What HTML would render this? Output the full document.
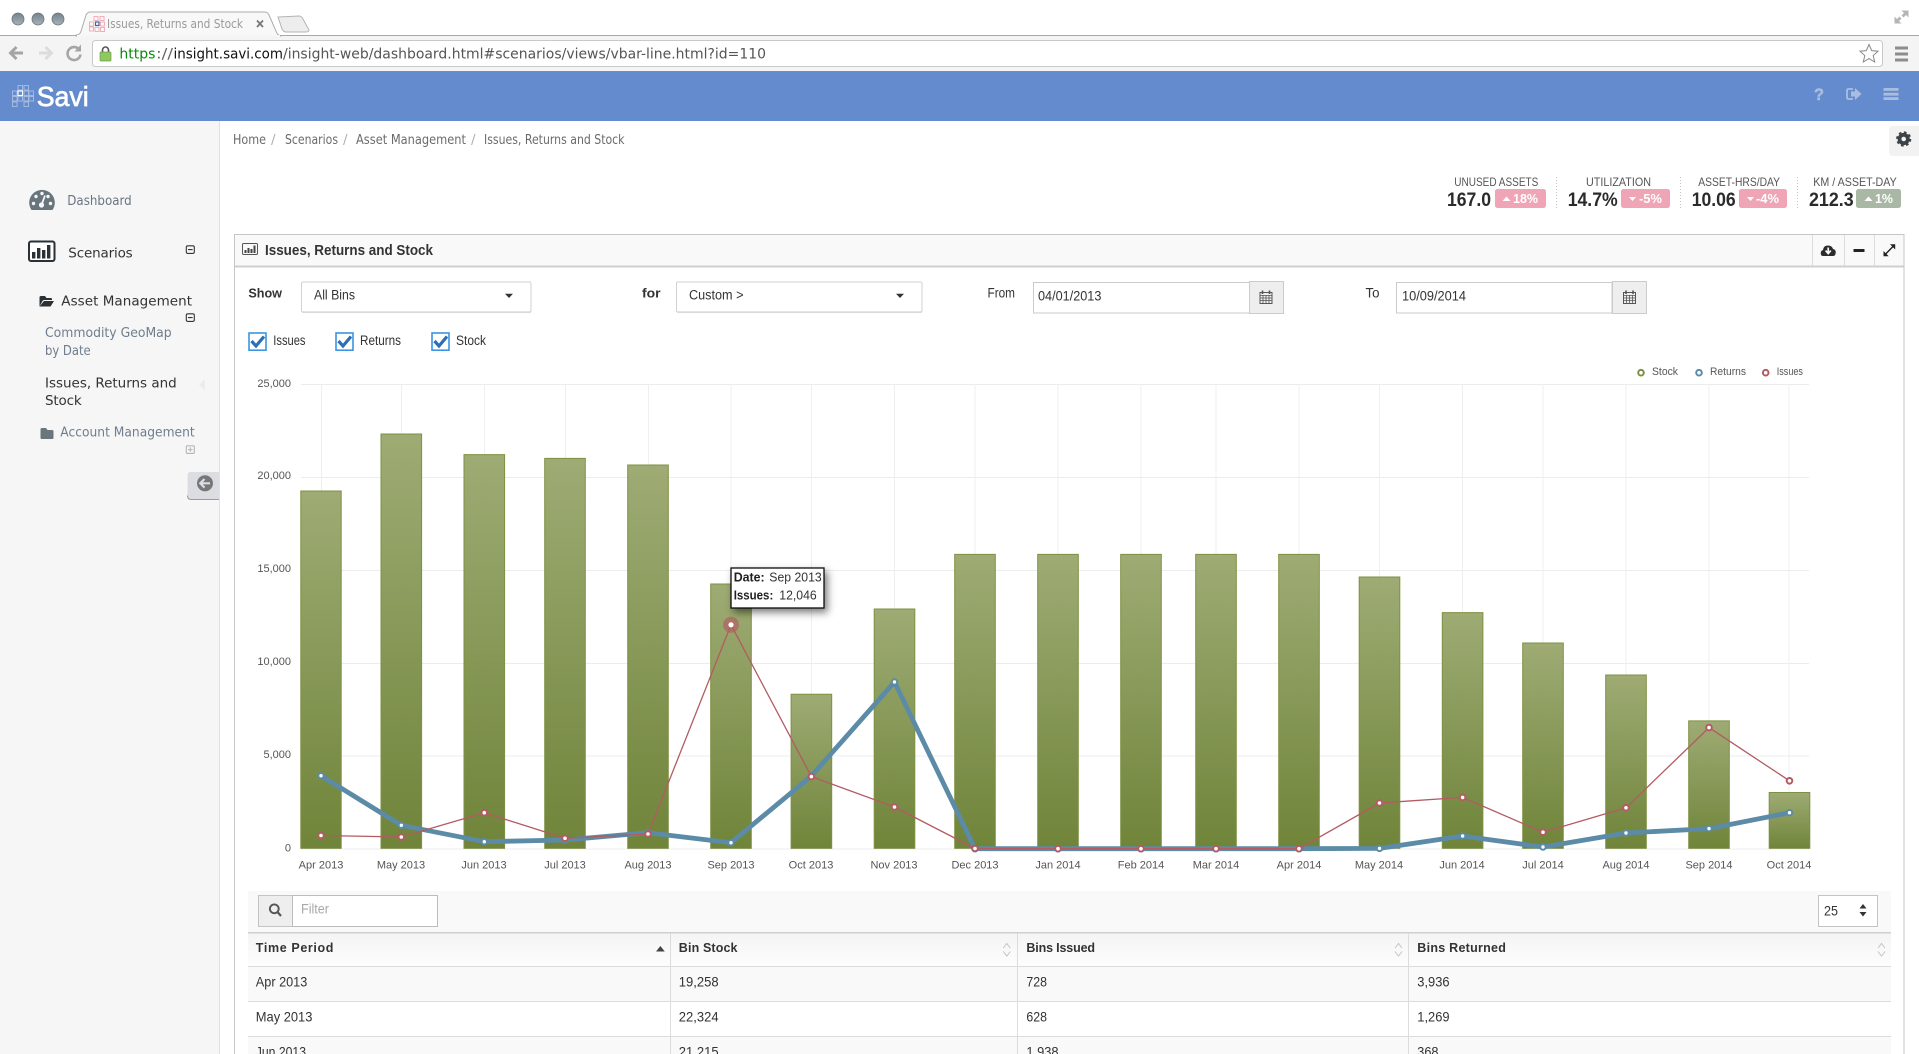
<!DOCTYPE html>
<html lang="en"><head><meta charset="utf-8"><title>Issues, Returns and Stock</title>
<style>
html,body{margin:0;padding:0;background:#fff;width:1919px;height:1054px;overflow:hidden}
svg{display:block;position:absolute;left:0;top:0}
text{font-family:"Liberation Sans",sans-serif;white-space:pre}
.d{font-family:"DejaVu Sans",sans-serif}
.b{font-weight:bold}
.g{font-size:12px;fill:#595959}
.t{font-size:13.5px;fill:#333}
.h{font-size:13px;font-weight:bold;fill:#333}
.k{font-size:19px;font-weight:bold;fill:#2b2b2b}
.kl{font-size:12px;fill:#555}
.bd{font-size:13px;font-weight:bold;fill:#fff}
.bc{font-size:13.5px;fill:#6b6b6b}
.sb{font-size:13.5px}
</style></head><body>
<svg width="1919" height="1054" viewBox="0 0 1919 1054" xmlns="http://www.w3.org/2000/svg">
<defs>
<linearGradient id="bar" x1="0" y1="0" x2="0" y2="1"><stop offset="0" stop-color="#9ba970"/><stop offset="1" stop-color="#6b8033"/></linearGradient>
<linearGradient id="th" x1="0" y1="0" x2="0" y2="1"><stop offset="0" stop-color="#f4f4f4"/><stop offset="1" stop-color="#fdfdfd"/></linearGradient>
<linearGradient id="dot" x1="0" y1="0" x2="0" y2="1"><stop offset="0" stop-color="#74828c"/><stop offset="1" stop-color="#a6b2b8"/></linearGradient>
<filter id="sh" x="-30%" y="-30%" width="170%" height="170%"><feDropShadow dx="3" dy="4" stdDeviation="4" flood-color="#000" flood-opacity=".5"/></filter>
</defs>
<rect width="1919" height="1054" fill="#fff"/>

<!-- browser chrome -->
<rect x="0" y="35" width="1919" height="37" fill="#f4f4f4"/>
<rect x="0" y="35" width="1919" height="1" fill="#a8a8a8"/>
<circle cx="18" cy="19" r="6" fill="url(#dot)" stroke="#6d7378" stroke-width=".8"/>
<circle cx="38" cy="19" r="6" fill="url(#dot)" stroke="#6d7378" stroke-width=".8"/>
<circle cx="58" cy="19" r="6" fill="url(#dot)" stroke="#6d7378" stroke-width=".8"/>
<path d="M76 35 C80 35 81 32 82 28 L86 15 C87 13 88 12 90 12 L264 12 C267 12 268 13 269 15 L276 31 C277 34 278 35 281 36 L76 36 Z" fill="#f8f8f8" stroke="#ababab" stroke-width="1"/>
<rect x="77" y="35" width="203" height="2" fill="#f6f6f6"/>
<path d="M278 17 L299 16 C301 16 302 17 303 19 L309 30 C309 31 308 32 306 32 L286 32 C284 32 283 31 282 29 Z" fill="#ededed" stroke="#b4b4b4"/>
<g fill="none" stroke="#f0b0ba" stroke-width="1"><rect x="94" y="16.5" width="4" height="4"/><rect x="100" y="16.5" width="4" height="4"/><rect x="89.5" y="22" width="4" height="4"/><rect x="100.5" y="22" width="4" height="4"/><rect x="89.5" y="27" width="4" height="4"/><rect x="95" y="27.5" width="4" height="4"/><rect x="100.5" y="27.5" width="4" height="4"/></g>
<rect x="95.5" y="22" width="3.5" height="3.5" fill="#fff" stroke="#3a5fb8" stroke-width="1.2"/>
<text x="107" y="28" font-size="12.5" fill="#9a9a9a" textLength="136" lengthAdjust="spacingAndGlyphs" class="d">Issues, Returns and Stock</text>
<path d="M257 20.5 L263 27 M263 20.5 L257 27" stroke="#777" stroke-width="1.8"/>
<path d="M1901.5 10.5 L1908.5 10.5 L1908.5 17.5 L1906 15 L1903.5 17.5 L1901.5 15.5 L1904 13 Z M1894.5 23.5 L1894.5 16.5 L1897 19 L1899.5 16.5 L1901.5 18.5 L1899 21 L1901.5 23.5 Z" fill="#b5b5b5"/>
<path d="M23 53 L11 53 M16.5 47 L10.5 53 L16.5 59" fill="none" stroke="#a5a5a5" stroke-width="3"/>
<path d="M39 53 L51 53 M45.5 47 L51.5 53 L45.5 59" fill="none" stroke="#dcdcdc" stroke-width="3"/>
<path d="M79.5 50 A6.5 6.5 0 1 0 80.5 54.5" fill="none" stroke="#a5a5a5" stroke-width="2.6"/><path d="M81 44.5 L81 51.5 L74.5 51.5 Z" fill="#a5a5a5"/>
<rect x="92.5" y="40.5" width="1790" height="26" rx="3" fill="#fff" stroke="#c9c9c9"/>
<path d="M102.5 53 L102.5 50 A3 3 0 0 1 108.5 50 L108.5 53" fill="none" stroke="#555" stroke-width="1.6"/>
<rect x="100" y="52" width="11" height="9" rx="1" fill="#8fc862" stroke="#6e9e45" stroke-width=".7"/>
<text x="119.4" y="58.3" class="d" font-size="14.5" fill="#0a8a0a" textLength="36" lengthAdjust="spacingAndGlyphs">https</text>
<text x="156" y="58.3" class="d" font-size="14.5" fill="#666" textLength="17" lengthAdjust="spacingAndGlyphs">://</text>
<text x="173.5" y="58.3" class="d" font-size="14.5" fill="#111" textLength="109.5" lengthAdjust="spacingAndGlyphs">insight.savi.com</text>
<text x="283" y="58.3" class="d" font-size="14.5" fill="#555" textLength="483" lengthAdjust="spacingAndGlyphs">/insight-web/dashboard.html#scenarios/views/vbar-line.html?id=110</text>
<path d="M1869 44.5 L1871.7 50.6 L1878 51.2 L1873.2 55.5 L1874.7 62 L1869 58.6 L1863.3 62 L1864.8 55.5 L1860 51.2 L1866.3 50.6 Z" fill="#fff" stroke="#888" stroke-width="1"/>
<g fill="#8d8d8d"><rect x="1895" y="46.5" width="13" height="3"/><rect x="1895" y="52.5" width="13" height="3"/><rect x="1895" y="58.5" width="13" height="3"/></g>
<rect x="0" y="71" width="1919" height="1" fill="#8a8a8a"/>

<!-- app header -->
<rect x="0" y="72" width="1919" height="49" fill="#648bcd"/>
<g fill="none" stroke="#a9bfe4" stroke-width=".9"><rect x="18" y="85.5" width="4.5" height="4.5"/><rect x="24" y="85.5" width="4.5" height="4.5"/><rect x="12.5" y="91" width="4.5" height="4.5"/><rect x="29" y="91" width="4.5" height="4.5"/><rect x="24" y="91" width="4.5" height="4.5"/><rect x="12.5" y="96.5" width="4.5" height="4.5"/><rect x="18" y="96.5" width="4.5" height="4.5"/><rect x="24" y="96.5" width="4.5" height="4.5"/><rect x="29" y="96.5" width="4.5" height="4.5"/><rect x="12.5" y="102" width="4.5" height="4.5"/><rect x="24" y="102" width="4.5" height="4.5"/></g>
<rect x="18" y="91" width="4.5" height="4.5" fill="none" stroke="#fff" stroke-width="1.1"/>
<text x="36.7" y="106" font-size="28" fill="#fff" stroke="#fff" stroke-width=".7" textLength="52" lengthAdjust="spacingAndGlyphs">Savi</text>
<text x="1814" y="100" font-size="17" class="b" fill="#a9bedf" stroke="#a9bedf" stroke-width=".5" textLength="10" lengthAdjust="spacingAndGlyphs">?</text>
<path d="M1853 89 L1848.5 89 Q1847 89 1847 90.5 L1847 97.5 Q1847 99 1848.5 99 L1853 99" fill="none" stroke="#a9bedf" stroke-width="1.8"/>
<path d="M1851 91.5 L1855 91.5 L1855 88 L1861.5 94 L1855 100 L1855 96.5 L1851 96.5 Z" fill="#a9bedf"/>
<g fill="#a9bedf"><rect x="1883.5" y="88" width="15" height="2.8"/><rect x="1883.5" y="92.8" width="15" height="2.8"/><rect x="1883.5" y="97.2" width="15" height="2.8"/></g>

<!-- sidebar -->
<rect x="0" y="121" width="219" height="933" fill="#f6f6f6"/>
<rect x="219" y="121" width="1" height="933" fill="#e2e2e2"/>
<path d="M31.5 210 A12.8 12.8 0 1 1 52.5 210 Z" fill="#69757c"/>
<g fill="#f6f6f6"><circle cx="33.5" cy="203.5" r="1.7"/><circle cx="36" cy="196.5" r="1.7"/><circle cx="42" cy="193.5" r="1.7"/><circle cx="50.5" cy="203.5" r="1.7"/><circle cx="48" cy="196.5" r="1.7"/><circle cx="41.5" cy="205" r="2.6"/></g>
<path d="M41.5 205 L45 195.5" stroke="#f6f6f6" stroke-width="1.8"/>
<text x="67.3" y="205" class="d sb" fill="#6a7580" textLength="64.4" lengthAdjust="spacingAndGlyphs">Dashboard</text>
<rect x="29" y="241.5" width="25.5" height="19.5" rx="2" fill="#fff" stroke="#2b3035" stroke-width="2"/>
<g fill="#2b3035"><rect x="32" y="252" width="3.4" height="6.5"/><rect x="37" y="248" width="3.4" height="10.5"/><rect x="42" y="250" width="3.4" height="8.5"/><rect x="47" y="245" width="3.4" height="13.5"/></g>
<text x="68.3" y="257.3" class="d sb" fill="#333" textLength="64.4" lengthAdjust="spacing">Scenarios</text>
<g fill="none" stroke="#333" stroke-width="1.1"><rect x="186.3" y="245.8" width="8" height="7.6" rx="1.5"/><rect x="186.3" y="313.8" width="8" height="7.6" rx="1.5"/></g>
<path d="M188 249.6 L192.6 249.6 M188 317.6 L192.6 317.6" stroke="#333" stroke-width="1.1"/>
<path d="M39.5 306.5 L39.5 297.5 Q39.5 296 41 296 L45 296 L46.5 298 L51 298 Q52 298 52 299 L52 300 L44 300 Q43 300 42.5 301 Z M43 306.5 L39.5 306.5 L44 301 L54 301 L50.5 306.5 Z" fill="#2b3035"/>
<text x="61.3" y="305.3" class="d sb" fill="#333" textLength="130.7" lengthAdjust="spacing">Asset Management</text>
<text x="45" y="337" class="d sb" fill="#6f7d8c" textLength="126.7" lengthAdjust="spacingAndGlyphs">Commodity GeoMap</text>
<text x="45" y="355" class="d sb" fill="#6f7d8c" textLength="45.7" lengthAdjust="spacingAndGlyphs">by Date</text>
<text x="45" y="387.3" class="d sb" fill="#333" textLength="131.7" lengthAdjust="spacing">Issues, Returns and</text>
<text x="45" y="405" class="d sb" fill="#333" textLength="36.7" lengthAdjust="spacing">Stock</text>
<path d="M205 379 L199 385 L205 391 Z" fill="#ececec"/>
<path d="M40.5 438 L40.5 429.5 Q40.5 428 42 428 L46 428 L47.5 430 L52 430 Q53.5 430 53.5 431.5 L53.5 438 Q53.5 439 52.5 439 L41.5 439 Q40.5 439 40.5 438 Z" fill="#6b757c"/>
<text x="60.3" y="436.7" class="d sb" fill="#6f7d8c" textLength="134.4" lengthAdjust="spacingAndGlyphs">Account Management</text>
<rect x="186.3" y="445.8" width="8" height="7.6" rx="1" fill="none" stroke="#b5b5b5" stroke-width="1.1"/>
<path d="M188 449.6 L192.6 449.6 M190.3 447.3 L190.3 452" stroke="#b5b5b5" stroke-width="1"/>
<path d="M219 472 L191 472 Q187.5 472 187.5 475.5 L187.5 495.5 Q187.5 499 191 499 L219 499 Z" fill="#dbdde3"/>
<path d="M187.5 495.5 Q187.5 499.5 191 499.5 L219 499.5" fill="none" stroke="#9c9c9c" stroke-width="1"/>
<circle cx="205" cy="483.3" r="8" fill="#777"/>
<path d="M210 483.3 L201 483.3 M204.5 479 L200.3 483.3 L204.5 487.6" fill="none" stroke="#dbdde3" stroke-width="2.2"/>

<!-- breadcrumb / gear -->
<text x="233" y="144" class="d bc" textLength="33" lengthAdjust="spacingAndGlyphs">Home</text>
<text x="271" y="144" class="d bc" style="fill:#b0b0b0">/</text>
<text x="285" y="144" class="d bc" textLength="53" lengthAdjust="spacingAndGlyphs">Scenarios</text>
<text x="343" y="144" class="d bc" style="fill:#b0b0b0">/</text>
<text x="356" y="144" class="d bc" textLength="110" lengthAdjust="spacingAndGlyphs">Asset Management</text>
<text x="471" y="144" class="d bc" style="fill:#b0b0b0">/</text>
<text x="484" y="144" class="d bc" textLength="140.5" lengthAdjust="spacingAndGlyphs">Issues, Returns and Stock</text>
<path d="M1919 126 L1893 126 Q1889 126 1889 130 L1889 152 Q1889 156 1893 156 L1919 156 Z" fill="#f2f2f2"/>
<circle cx="1903.7" cy="139" r="4.2" fill="none" stroke="#3c4348" stroke-width="3.8"/>
<circle cx="1903.7" cy="139" r="6.4" fill="none" stroke="#3c4348" stroke-width="2.4" stroke-dasharray="2.6 2.42"/>

<!-- KPIs -->
<text x="1454.3" y="186" class="kl" textLength="84" lengthAdjust="spacingAndGlyphs">UNUSED ASSETS</text>
<text x="1586" y="186" class="kl" textLength="65" lengthAdjust="spacingAndGlyphs">UTILIZATION</text>
<text x="1698.3" y="186" class="kl" textLength="81.7" lengthAdjust="spacingAndGlyphs">ASSET-HRS/DAY</text>
<text x="1813.3" y="186" class="kl" textLength="83.4" lengthAdjust="spacingAndGlyphs">KM / ASSET-DAY</text>
<text x="1447" y="206" class="k" textLength="44" lengthAdjust="spacingAndGlyphs">167.0</text>
<text x="1567.7" y="206" class="k" textLength="50" lengthAdjust="spacingAndGlyphs">14.7%</text>
<text x="1691.7" y="206" class="k" textLength="44" lengthAdjust="spacingAndGlyphs">10.06</text>
<text x="1809" y="206" class="k" textLength="44.7" lengthAdjust="spacingAndGlyphs">212.3</text>
<rect x="1495" y="189" width="51" height="19" rx="2.5" fill="#efa5b5"/>
<rect x="1621" y="189" width="49" height="19" rx="2.5" fill="#efa5b5"/>
<rect x="1739" y="189" width="48" height="19" rx="2.5" fill="#efa5b5"/>
<rect x="1856" y="189" width="45" height="19" rx="2.5" fill="#a8b8a4"/>
<path d="M1502.5 201 L1506.5 196.5 L1510.5 201 Z M1629 197 L1636 197 L1632.5 201 Z M1747 197 L1754 197 L1750.5 201 Z M1864.5 201 L1868.5 196.5 L1872.5 201 Z" fill="#fff"/>
<text x="1513" y="203" class="bd" textLength="25" lengthAdjust="spacingAndGlyphs">18%</text>
<text x="1639" y="203" class="bd" textLength="23" lengthAdjust="spacingAndGlyphs">-5%</text>
<text x="1756" y="203" class="bd" textLength="23" lengthAdjust="spacingAndGlyphs">-4%</text>
<text x="1875" y="203" class="bd" textLength="18" lengthAdjust="spacingAndGlyphs">1%</text>
<path d="M1556.5 177 V209 M1680.5 177 V209 M1797.5 177 V209" stroke="#c4c4c4" stroke-dasharray="1 2"/>

<!-- panel -->
<rect x="234.5" y="234.5" width="1669.5" height="830" fill="#fff" stroke="#c6c6c6"/>
<rect x="235" y="235" width="1668.5" height="32" fill="#f9f9f9"/>
<rect x="235" y="265.5" width="1668.5" height="2" fill="#cfcfcf"/>
<path d="M1812.5 235 V266 M1844.5 235 V266 M1874.5 235 V266" stroke="#dcdcdc"/>
<rect x="242.5" y="243.5" width="15" height="11" rx="1.2" fill="none" stroke="#555"/>
<g fill="#444"><rect x="244.5" y="250" width="2" height="3"/><rect x="247.5" y="248" width="2" height="5"/><rect x="250.5" y="249" width="2" height="4"/><rect x="253.5" y="245.5" width="2" height="7.5"/></g>
<text x="265" y="255" font-size="14.5" class="b" fill="#333" textLength="168" lengthAdjust="spacingAndGlyphs">Issues, Returns and Stock</text>
<path d="M1823 256 Q1820.5 256 1820.8 252.5 Q1821 250.5 1823 250 Q1823.5 245.5 1828 245.5 Q1832 245.5 1833 249 Q1836 249.5 1835.7 252.8 Q1835.5 256 1833 256 Z" fill="#2c2c2c"/>
<path d="M1828.2 247.5 V253 M1825.6 250.6 L1828.2 253.6 L1830.8 250.6" stroke="#f9f9f9" stroke-width="1.7" fill="none"/>
<rect x="1853.5" y="249" width="11" height="3" fill="#222"/>
<path d="M1884 255.7 L1894.7 244.8" stroke="#222" stroke-width="1.4"/>
<path d="M1883.5 251 V256.2 H1888.7 Z M1895.2 249.5 V244.3 H1890 Z" fill="#222"/>

<!-- form row -->
<text x="248.4" y="297.7" class="h" textLength="33.6" lengthAdjust="spacingAndGlyphs">Show</text>
<rect x="301.5" y="282" width="229.5" height="30" rx="1.5" fill="#fff" stroke="#d2d2d2"/>
<rect x="302" y="311.5" width="229" height="1.2" fill="#cacaca"/>
<text x="314" y="299.3" class="t" textLength="41" lengthAdjust="spacingAndGlyphs">All Bins</text>
<path d="M505 293.7 L513 293.7 L509 298 Z" fill="#333"/>
<text x="642" y="297.7" class="h" textLength="18.6" lengthAdjust="spacingAndGlyphs">for</text>
<rect x="676.5" y="282" width="245.5" height="30" rx="1.5" fill="#fff" stroke="#d2d2d2"/>
<rect x="677" y="311.5" width="245" height="1.2" fill="#cacaca"/>
<text x="689" y="299.3" class="t" textLength="54.5" lengthAdjust="spacingAndGlyphs">Custom &gt;</text>
<path d="M896 293.7 L904 293.7 L900 298 Z" fill="#333"/>
<text x="987.5" y="297.7" class="t" textLength="27.5" lengthAdjust="spacingAndGlyphs">From</text>
<rect x="1033.5" y="282.5" width="216" height="30.5" fill="#fff" stroke="#cbcbcb"/>
<rect x="1249.5" y="281.5" width="34" height="32" fill="#eee" stroke="#cbcbcb"/>
<text x="1038" y="300.7" class="t" textLength="63.4" lengthAdjust="spacingAndGlyphs">04/01/2013</text>
<text x="1365.5" y="297.7" class="t" textLength="14" lengthAdjust="spacingAndGlyphs">To</text>
<rect x="1396.5" y="282.5" width="215.5" height="30.5" fill="#fff" stroke="#cbcbcb"/>
<rect x="1612.5" y="281.5" width="34" height="32" fill="#eee" stroke="#cbcbcb"/>
<text x="1402" y="300.7" class="t" textLength="64" lengthAdjust="spacingAndGlyphs">10/09/2014</text>
<g fill="none" stroke="#555">
<rect x="1260" y="292.5" width="12" height="11"/><path d="M1260 295.5 H1272 M1260 298 H1272 M1260 300.6 H1272 M1263 295 V303 M1266 295 V303 M1269 295 V303" stroke-width=".8"/>
<rect x="1623.5" y="292.5" width="12" height="11"/><path d="M1623.5 295.5 H1635.5 M1623.5 298 H1635.5 M1623.5 300.6 H1635.5 M1626.5 295 V303 M1629.5 295 V303 M1632.5 295 V303" stroke-width=".8"/>
</g>
<path d="M1262.5 290.5 V294 M1269.5 290.5 V294 M1626 290.5 V294 M1633 290.5 V294" stroke="#555" stroke-width="1.6"/>

<!-- checkboxes -->
<g fill="#fff" stroke="#3b95e0" stroke-width="1.6"><rect x="249" y="333" width="17" height="17.2"/><rect x="336" y="333" width="17" height="17.2"/><rect x="432" y="333" width="17" height="17.2"/></g>
<g fill="none" stroke="#2c6fb3" stroke-width="3.2"><path d="M251.5 341 L256 346 L264 336.5"/><path d="M338.5 341 L343 346 L351 336.5"/><path d="M434.5 341 L439 346 L447 336.5"/></g>
<text x="273.3" y="345" class="t" textLength="32.2" lengthAdjust="spacingAndGlyphs">Issues</text>
<text x="360" y="345" class="t" textLength="41" lengthAdjust="spacingAndGlyphs">Returns</text>
<text x="456" y="345" class="t" textLength="30" lengthAdjust="spacingAndGlyphs">Stock</text>

<!-- legend -->
<circle cx="1641" cy="372.7" r="2.8" fill="#fff" stroke="#7c8f3f" stroke-width="2"/>
<circle cx="1699" cy="372.7" r="2.8" fill="#fff" stroke="#5b8ba6" stroke-width="2"/>
<circle cx="1765.7" cy="372.7" r="2.8" fill="#fff" stroke="#b25c62" stroke-width="2"/>
<g font-size="11" fill="#555"><text x="1652" y="375" textLength="26" lengthAdjust="spacingAndGlyphs">Stock</text><text x="1710" y="375" textLength="36" lengthAdjust="spacingAndGlyphs">Returns</text><text x="1776.7" y="375" textLength="26.3" lengthAdjust="spacingAndGlyphs">Issues</text></g>

<!-- grid -->
<path d="M301 384.5 H1809 M301 477.5 H1809 M301 570.5 H1809 M301 663.5 H1809 M301 756 H1809 M301 849 H1809" stroke="#ececec"/>
<path d="M321.5 384 V849 M401.5 384 V849 M484.5 384 V849 M565.5 384 V849 M648.5 384 V849 M731 384 V849 M811.5 384 V849 M894.5 384 V849 M975 384 V849 M1058 384 V849 M1141 384 V849 M1216 384 V849 M1299 384 V849 M1379.5 384 V849 M1462.5 384 V849 M1543 384 V849 M1626 384 V849 M1709 384 V849 M1789 384 V849" stroke="#efefef"/>
<g font-size="11" fill="#555" text-anchor="end">
<text x="291" y="387">25,000</text><text x="291" y="479">20,000</text><text x="291" y="572">15,000</text><text x="291" y="665">10,000</text><text x="291" y="758">5,000</text><text x="291" y="851.5">0</text>
</g>

<!-- bars -->
<g fill="url(#bar)" stroke="#7e9142" stroke-width="1" fill-opacity=".97">
<path d="M300.8 848.7 V491 H341.2 V848.7"/>
<path d="M381 848.7 V434 H421.6 V848.7"/>
<path d="M464 848.7 V454.6 H504.6 V848.7"/>
<path d="M544.7 848.7 V458.4 H585.3 V848.7"/>
<path d="M627.7 848.7 V465 H668.3 V848.7"/>
<path d="M710.7 848.7 V584 H751.3 V848.7"/>
<path d="M791.1 848.7 V694.3 H831.7 V848.7"/>
<path d="M874.2 848.7 V609 H914.8 V848.7"/>
<path d="M954.7 848.7 V554.4 H995.3 V848.7"/>
<path d="M1037.7 848.7 V554.4 H1078.3 V848.7"/>
<path d="M1120.7 848.7 V554.4 H1161.3 V848.7"/>
<path d="M1195.7 848.7 V554.4 H1236.3 V848.7"/>
<path d="M1278.7 848.7 V554.4 H1319.3 V848.7"/>
<path d="M1359.2 848.7 V577 H1399.8 V848.7"/>
<path d="M1442.3 848.7 V612.6 H1482.9 V848.7"/>
<path d="M1522.7 848.7 V643 H1563.3 V848.7"/>
<path d="M1605.7 848.7 V675 H1646.3 V848.7"/>
<path d="M1688.7 848.7 V720.9 H1729.3 V848.7"/>
<path d="M1769.2 848.7 V792.5 H1809.8 V848.7"/>
</g>

<!-- lines -->
<polyline fill="none" stroke="#5b8ba6" stroke-width="4.8" stroke-linejoin="round" points="321,775.7 401.3,825.3 484.3,841.7 565,840 648,832.7 731,842.7 811.4,776 894.5,682 975,848.7 1058,848.7 1141,848.7 1216,848.7 1299,848.7 1379.5,848.4 1462.6,836 1543,847 1626,833 1709,828.6 1789.5,812.7"/>
<g fill="#fff" stroke="#5b8ba6" stroke-width="2"><circle cx="321" cy="775.7" r="2.7"/><circle cx="401.3" cy="825.3" r="2.7"/><circle cx="484.3" cy="841.7" r="2.7"/><circle cx="565" cy="840" r="2.7"/><circle cx="648" cy="832.7" r="2.7"/><circle cx="731" cy="842.7" r="2.7"/><circle cx="811.4" cy="776" r="2.7"/><circle cx="894.5" cy="682" r="2.7"/><circle cx="975" cy="848.7" r="2.7"/><circle cx="1058" cy="848.7" r="2.7"/><circle cx="1141" cy="848.7" r="2.7"/><circle cx="1216" cy="848.7" r="2.7"/><circle cx="1299" cy="848.7" r="2.7"/><circle cx="1379.5" cy="848.4" r="2.7"/><circle cx="1462.6" cy="836" r="2.7"/><circle cx="1543" cy="847" r="2.7"/><circle cx="1626" cy="833" r="2.7"/><circle cx="1709" cy="828.6" r="2.7"/><circle cx="1789.5" cy="812.7" r="2.7"/></g>
<polyline fill="none" stroke="#b25c62" stroke-width="1.3" stroke-linejoin="round" points="321,835.5 401.3,837 484.3,812.7 565,838.3 648,834 731,624.8 811.4,776.6 894.5,807 975,848.5 1058,848.7 1141,848.7 1216,848.7 1299,848.7 1379.5,803 1462.6,797.4 1543,832.2 1626,807.8 1709,727.6 1789.5,780.8"/>
<circle cx="731" cy="624.8" r="8" fill="#b25c62" fill-opacity=".65"/>
<g fill="#fff" stroke="#b25c62" stroke-width="2"><circle cx="321" cy="835.5" r="2.8"/><circle cx="401.3" cy="837" r="2.8"/><circle cx="484.3" cy="812.7" r="2.8"/><circle cx="565" cy="838.3" r="2.8"/><circle cx="648" cy="834" r="2.8"/><circle cx="731" cy="624.8" r="2.6" stroke="none"/><circle cx="811.4" cy="776.6" r="2.8"/><circle cx="894.5" cy="807" r="2.8"/><circle cx="975" cy="848.5" r="2.8"/><circle cx="1058" cy="848.7" r="2.8"/><circle cx="1141" cy="848.7" r="2.8"/><circle cx="1216" cy="848.7" r="2.8"/><circle cx="1299" cy="848.7" r="2.8"/><circle cx="1379.5" cy="803" r="2.8"/><circle cx="1462.6" cy="797.4" r="2.8"/><circle cx="1543" cy="832.2" r="2.8"/><circle cx="1626" cy="807.8" r="2.8"/><circle cx="1709" cy="727.6" r="2.8"/><circle cx="1789.5" cy="780.8" r="2.8"/></g>

<!-- x labels -->
<g font-size="11" fill="#555" text-anchor="middle">
<text x="321" y="868.5">Apr 2013</text><text x="401" y="868.5">May 2013</text><text x="484" y="868.5">Jun 2013</text><text x="565" y="868.5">Jul 2013</text><text x="648" y="868.5">Aug 2013</text><text x="731" y="868.5">Sep 2013</text><text x="811" y="868.5">Oct 2013</text><text x="894" y="868.5">Nov 2013</text><text x="975" y="868.5">Dec 2013</text><text x="1058" y="868.5">Jan 2014</text><text x="1141" y="868.5">Feb 2014</text><text x="1216" y="868.5">Mar 2014</text><text x="1299" y="868.5">Apr 2014</text><text x="1379" y="868.5">May 2014</text><text x="1462" y="868.5">Jun 2014</text><text x="1543" y="868.5">Jul 2014</text><text x="1626" y="868.5">Aug 2014</text><text x="1709" y="868.5">Sep 2014</text><text x="1789" y="868.5">Oct 2014</text>
</g>

<!-- tooltip -->
<rect x="731" y="568" width="93" height="40" fill="#fff" stroke="#111" stroke-width="1.3" filter="url(#sh)"/>
<text x="733.7" y="581.7" font-size="12.5" class="b" fill="#222" textLength="31" lengthAdjust="spacingAndGlyphs">Date:</text>
<text x="769.3" y="581.7" font-size="12.5" fill="#333" textLength="52.4" lengthAdjust="spacingAndGlyphs">Sep 2013</text>
<text x="733.7" y="599.3" font-size="12.5" class="b" fill="#222" textLength="39.6" lengthAdjust="spacingAndGlyphs">Issues:</text>
<text x="779.3" y="599.3" font-size="12.5" fill="#333" textLength="37.4" lengthAdjust="spacingAndGlyphs">12,046</text>

<!-- table toolbar -->
<rect x="248" y="891" width="1643" height="41" fill="#f9f9f9"/>
<rect x="258.5" y="895.5" width="34" height="31" fill="#eee" stroke="#c4c4c4"/>
<rect x="292.5" y="895.5" width="145" height="31" fill="#fff" stroke="#bcbcbc"/>
<circle cx="274.3" cy="908.8" r="4.4" fill="none" stroke="#555" stroke-width="1.9"/>
<path d="M277.5 912 L281 916" stroke="#555" stroke-width="2.2"/>
<text x="301" y="913.3" font-size="13.5" fill="#a8a8a8" textLength="28" lengthAdjust="spacingAndGlyphs">Filter</text>
<rect x="1818.5" y="895.5" width="59" height="31" fill="#fff" stroke="#c4c4c4"/>
<text x="1824" y="915.7" font-size="13.5" fill="#333" textLength="14" lengthAdjust="spacingAndGlyphs">25</text>
<path d="M1859.5 908.5 L1866.5 908.5 L1863 904 Z M1859.5 912 L1866.5 912 L1863 916.5 Z" fill="#333"/>

<!-- table -->
<rect x="248" y="933" width="1643" height="33" fill="url(#th)"/>
<rect x="248" y="932" width="1643" height="1.5" fill="#cfcfcf"/>
<rect x="248" y="967" width="1643" height="34" fill="#f9f9f9"/>
<rect x="248" y="1037" width="1643" height="17" fill="#f9f9f9"/>
<path d="M248 966.5 H1891 M248 1001.5 H1891 M248 1036.5 H1891" stroke="#dcdcdc"/>
<path d="M670.5 933 V1054 M1017.5 933 V1054 M1408.5 933 V1054" stroke="#dcdcdc"/>
<text x="255.8" y="952" class="h" font-size="12.5" style="font-size:12.5px" textLength="77.6" lengthAdjust="spacing">Time Period</text>
<text x="678.8" y="952" class="h" style="font-size:12.5px" textLength="58.7" lengthAdjust="spacing">Bin Stock</text>
<text x="1026.4" y="952" class="h" style="font-size:12.5px" textLength="68.6" lengthAdjust="spacing">Bins Issued</text>
<text x="1417.3" y="952" class="h" style="font-size:12.5px" textLength="88.6" lengthAdjust="spacing">Bins Returned</text>
<path d="M656 951.5 L664.8 951.5 L660.4 946 Z" fill="#444"/>
<g fill="none" stroke="#c4c4c4"><path d="M1003.3 948 L1006.8 943.5 L1010.3 948 M1003.3 951.5 L1006.8 956 L1010.3 951.5"/><path d="M1395 948 L1398.5 943.5 L1402 948 M1395 951.5 L1398.5 956 L1402 951.5"/><path d="M1878 948 L1881.5 943.5 L1885 948 M1878 951.5 L1881.5 956 L1885 951.5"/></g>
<g>
<text class="t" x="255.8" y="986.7" textLength="51.5" lengthAdjust="spacingAndGlyphs">Apr 2013</text>
<text class="t" x="678.8" y="986.7" textLength="39.8" lengthAdjust="spacingAndGlyphs">19,258</text>
<text class="t" x="1026.4" y="986.7" textLength="20.6" lengthAdjust="spacingAndGlyphs">728</text>
<text class="t" x="1417.3" y="986.7" textLength="32.3" lengthAdjust="spacingAndGlyphs">3,936</text>
<text class="t" x="255.8" y="1021.7" textLength="56.6" lengthAdjust="spacingAndGlyphs">May 2013</text>
<text class="t" x="678.8" y="1021.7" textLength="39.8" lengthAdjust="spacingAndGlyphs">22,324</text>
<text class="t" x="1026.4" y="1021.7" textLength="20.6" lengthAdjust="spacingAndGlyphs">628</text>
<text class="t" x="1417.3" y="1021.7" textLength="32.3" lengthAdjust="spacingAndGlyphs">1,269</text>
<text class="t" x="255.8" y="1056.7" textLength="50.2" lengthAdjust="spacingAndGlyphs">Jun 2013</text>
<text class="t" x="678.8" y="1056.7" textLength="39.8" lengthAdjust="spacingAndGlyphs">21,215</text>
<text class="t" x="1026.4" y="1056.7" textLength="32.2" lengthAdjust="spacingAndGlyphs">1,938</text>
<text class="t" x="1417.3" y="1056.7" textLength="21.2" lengthAdjust="spacingAndGlyphs">368</text>
</g>
</svg>
</body></html>
